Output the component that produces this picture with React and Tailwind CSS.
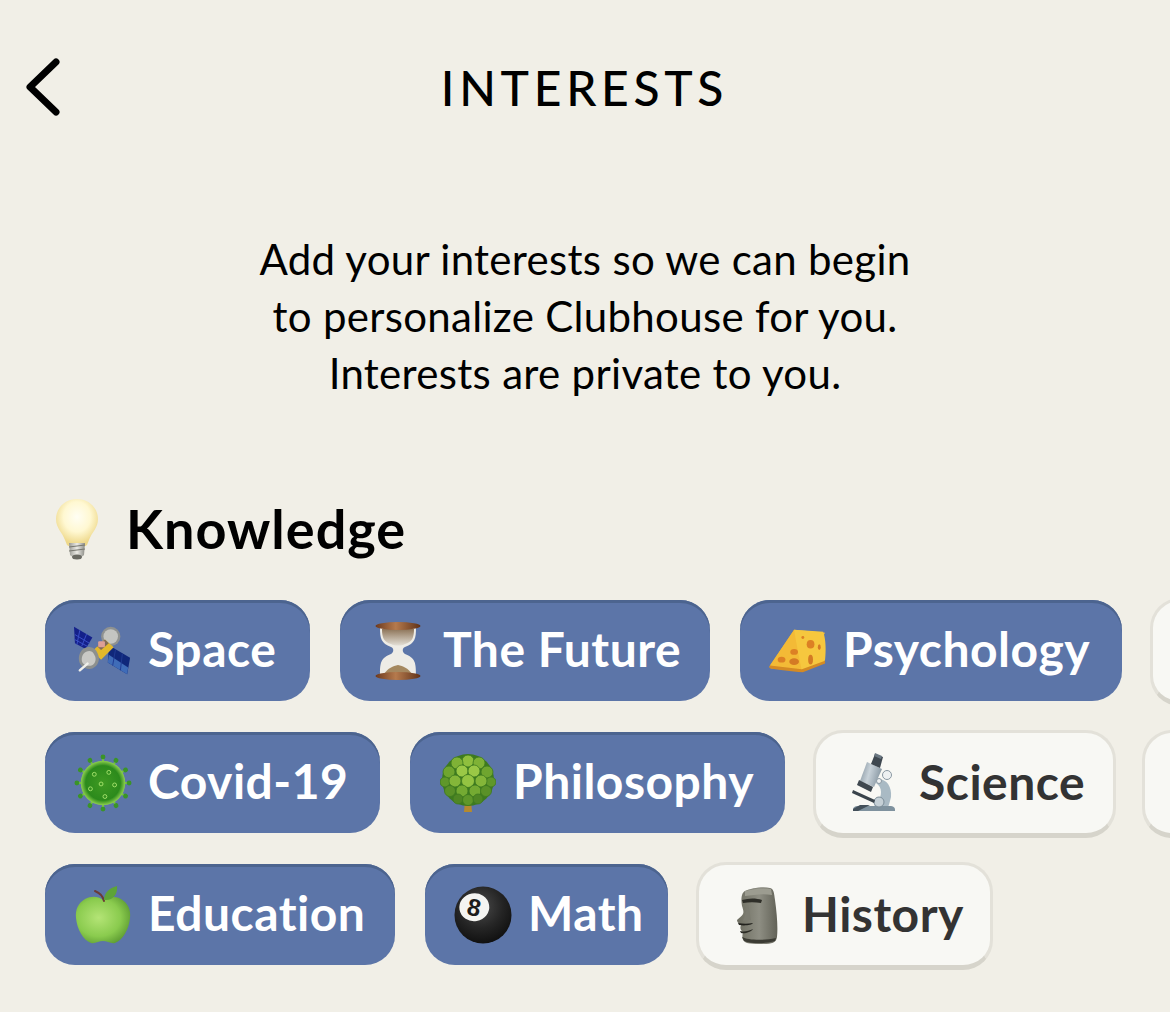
import React from "react";

const Bulb = () => (
  <svg viewBox="0 0 46 62" className="w-[46px] h-[62px]">
    <defs>
      <radialGradient id="bulbGlass" cx="50%" cy="38%" r="58%">
        <stop offset="0%" stopColor="#fffef4" />
        <stop offset="55%" stopColor="#fff8d2" />
        <stop offset="100%" stopColor="#eed88a" />
      </radialGradient>
      <linearGradient id="bulbBase" x1="0" x2="1" y1="0" y2="0">
        <stop offset="0%" stopColor="#9b9b95" />
        <stop offset="50%" stopColor="#ecebe6" />
        <stop offset="100%" stopColor="#8b8b85" />
      </linearGradient>
    </defs>
    <path d="M23 1C11 1 2 10 2 21c0 9 6 13 9 21l2 5c1 1 2 1 3 1h14c1 0 2 0 3-1l2-5c3-8 9-12 9-21C44 10 35 1 23 1z" fill="url(#bulbGlass)" />
    <path d="M15 45h16l-1 12c-2 3-12 3-14 0z" fill="url(#bulbBase)" />
    <path d="M15 49l16-2M15 53l16-2" stroke="#77776f" strokeWidth="1" />
    <ellipse cx="23" cy="59" rx="5" ry="2.500" fill="#6a6a63" />
  </svg>
);

const Satellite = () => (
  <svg viewBox="0 0 60 60" className="w-[60px] h-[60px]">
    <path d="M0 5l19 11-7 12-11-6z" fill="#14208a" />
    <path d="M6 8.500l-3 15M13 12.500l-5 12.500M1 13l15 9M0.500 18l13 7" stroke="#3a50c8" strokeWidth="1" fill="none" />
    <path d="M36 24l22 13-3 17-20-12z" fill="#10277a" />
    <path d="M36 34l20 13-1 7-20-12z" fill="#3f6cb8" />
    <path d="M43 28l-3 17M50 33l-2 17" stroke="#1f3a92" strokeWidth="1" />
    <circle cx="38" cy="15" r="10" fill="#8f9291" />
    <circle cx="38" cy="15" r="7.500" fill="#c4c5c1" />
    <path d="M19 30l13-12 9 8-13 13z" fill="#e3b92c" />
    <path d="M24 25l8-7 4 4-8 7z" fill="#7f6a58" />
    <rect x="25" y="20" width="7" height="6" rx="1" fill="#dd9f96" />
    <path d="M17 26c-7-1-12 5-12 12 0 8 8 12 14 10 6-2 8-9 6-14-1-4-4-8-8-8z" fill="#8d908e" />
    <path d="M16 30c-5 0-8 4-8 9s6 7 10 6c4-1 5-6 4-9-1-3-3-6-6-6z" fill="#c9c9c5" />
    <path d="M14 43l-8 7" stroke="#f0f0eb" strokeWidth="2.500" strokeLinecap="round" />
  </svg>
);

const Hourglass = () => (
  <svg viewBox="0 0 46 60" className="w-[46px] h-[60px]">
    <defs>
      <linearGradient id="hourWood" x1="0" x2="1" y1="0" y2="0">
        <stop offset="0%" stopColor="#6d3a1e" />
        <stop offset="45%" stopColor="#b57a4d" />
        <stop offset="100%" stopColor="#5f3118" />
      </linearGradient>
      <linearGradient id="hourSand" x1="0" x2="0" y1="0" y2="1">
        <stop offset="0%" stopColor="#8d7458" />
        <stop offset="100%" stopColor="#e3dfd6" />
      </linearGradient>
    </defs>
    <path d="M5 6h36c0 12-1 16-11 20-3 1-3 5 0 7 10 4 11 8 11 21H5c0-13 1-17 11-21 3-2 3-6 0-7C6 22 5 18 5 6z" fill="#eeece6" />
    <path d="M7 8h32c0 9-2 13-9 15-3 2-11 2-14 0-7-2-9-6-9-15z" fill="url(#hourSand)" />
    <path d="M9 53c4-6 9-8 14-9 5 1 10 3 14 9z" fill="#a5885f" />
    <ellipse cx="23" cy="5" rx="22.500" ry="4" fill="url(#hourWood)" />
    <ellipse cx="23" cy="55" rx="22.500" ry="4" fill="url(#hourWood)" />
  </svg>
);

const Cheese = () => (
  <svg viewBox="0 0 60 48" className="w-[60px] h-[48px]">
    <path d="M26 2L1 39c-1 2 0 3 2 3l31 3z" fill="#f0b02c" />
    <path d="M26 2l32 3-24 40-33-6z" fill="#f3ba36" />
    <path d="M26 2l30 2c3 8 3 20 2 29-1 3-2 3-4 4l-20 8C31 30 28 15 26 2z" fill="#f6c73e" />
    <path d="M1 39l33 4 24-9v3l-23 9c-12-1-26-3-33-4-2 0-2-2-1-3z" fill="#d48a24" />
    <ellipse cx="26" cy="25" rx="4" ry="3" fill="#dc8024" />
    <ellipse cx="13" cy="33" rx="4" ry="3" fill="#dc8024" />
    <ellipse cx="26" cy="35" rx="5" ry="3.500" fill="#d47a24" />
    <ellipse cx="43" cy="17" rx="4" ry="4.500" fill="#dc8024" />
    <ellipse cx="52" cy="20" rx="1.500" ry="3" fill="#d47a24" />
    <ellipse cx="43" cy="33" rx="2.500" ry="5" fill="#d47a24" />
    <circle cx="35" cy="10" r="1.500" fill="#dc8024" />
  </svg>
);

const spikes = [0, 30, 60, 90, 120, 150, 180, 210, 240, 270, 300, 330];

const Virus = () => (
  <svg viewBox="0 0 60 60" className="w-[60px] h-[60px]">
    <defs>
      <radialGradient id="virusBody" cx="50%" cy="50%" r="50%">
        <stop offset="0%" stopColor="#3f9a22" />
        <stop offset="78%" stopColor="#2c8a1c" />
        <stop offset="100%" stopColor="#8ed04f" />
      </radialGradient>
    </defs>
    {spikes.map((a) => (
      <g key={a} transform={`rotate(${a} 30 30)`}>
        <line x1="30" y1="8" x2="30" y2="3" stroke="#74c044" strokeWidth="2" />
        <circle cx="30" cy="3" r="2.500" fill="#3a9428" />
      </g>
    ))}
    <circle cx="30" cy="30" r="23" fill="url(#virusBody)" />
    <circle cx="21" cy="21" r="2" fill="none" stroke="#a3e06a" strokeWidth="1" />
    <circle cx="36" cy="19" r="2" fill="none" stroke="#a3e06a" strokeWidth="1" />
    <circle cx="28" cy="31" r="2" fill="none" stroke="#a3e06a" strokeWidth="1" />
    <circle cx="42" cy="32" r="2" fill="none" stroke="#a3e06a" strokeWidth="1" />
    <circle cx="17" cy="36" r="2" fill="none" stroke="#a3e06a" strokeWidth="1" />
    <circle cx="32" cy="44" r="2" fill="none" stroke="#a3e06a" strokeWidth="1" />
  </svg>
);

const clumps = [
  [28, 8, 6, "#8fbf3e"], [17, 10, 6, "#7fb236"], [39, 10, 6, "#7fb236"], [9, 19, 6, "#6fa52f"],
  [47, 19, 6, "#6fa52f"], [22, 18, 6, "#9ac846"], [34, 18, 6, "#9ac846"], [5, 29, 5, "#5f972a"],
  [51, 29, 5, "#5f972a"], [15, 28, 6, "#84b639"], [28, 28, 6.500, "#94c442"], [41, 28, 6, "#84b639"],
  [10, 38, 5.500, "#5a9128"], [22, 38, 6, "#74aa32"], [35, 38, 6, "#74aa32"], [46, 38, 5.500, "#5a9128"],
  [18, 46, 5, "#4f8624"], [28, 47, 5.500, "#5f972a"], [38, 46, 5, "#4f8624"],
];

const Tree = () => (
  <svg viewBox="0 0 56 60" className="w-[56px] h-[60px]">
    <path d="M25 48h6l1 11h-8z" fill="#b58a2e" />
    <circle cx="28" cy="27" r="26" fill="#3d7a1f" />
    {clumps.map(([x, y, r, c], i) => (
      <circle key={i} cx={x} cy={y} r={r} fill={c} stroke="#3d7a1f" strokeWidth="0.800" />
    ))}
  </svg>
);

const Microscope = () => (
  <svg viewBox="0 0 46 60" className="w-[46px] h-[60px]">
    <defs>
      <linearGradient id="scopeMetal" x1="0" x2="1" y1="0" y2="0.300">
        <stop offset="0%" stopColor="#7f8e99" />
        <stop offset="50%" stopColor="#c8d2d9" />
        <stop offset="100%" stopColor="#8b9aa5" />
      </linearGradient>
    </defs>
    <path d="M27 26c9 0 14 8 13 18-1 4-2 8-3 10H22c4-4 8-8 8-15 0-4-2-7-5-9z" fill="#a9bac4" />
    <path d="M2 57c0-3 2-4 5-4h32c3 0 5 1 5 4v1H2z" fill="#7f929e" />
    <path d="M2 56l7-4h10l-12 6H2z" fill="#43505a" />
    <circle cx="28" cy="49" r="5" fill="#c5d0d6" stroke="#7c8d98" strokeWidth="1" />
    <path d="M2 37l22 10-1 3L1 40z" fill="#39434b" />
    <path d="M16 9l15 7-8 18-14-6z" fill="url(#scopeMetal)" />
    <path d="M8 27l14 7-2 5-14-7z" fill="#3f4850" />
    <path d="M24 1l8 3-3 11-9-4z" fill="#3f4850" />
    <path d="M24 0l7 3-1 3-7-3z" fill="#6a7781" />
    <circle cx="36" cy="22" r="4.500" fill="#eef1f2" stroke="#8a98a2" strokeWidth="1" />
    <circle cx="28" cy="28" r="2.500" fill="#eef1f2" stroke="#8a98a2" strokeWidth="1" />
  </svg>
);

const Apple = () => (
  <svg viewBox="0 0 56 60" className="w-[56px] h-[60px]">
    <defs>
      <radialGradient id="appleSkin" cx="42%" cy="45%" r="62%">
        <stop offset="0%" stopColor="#b4e476" />
        <stop offset="65%" stopColor="#8acb4e" />
        <stop offset="100%" stopColor="#5f9e33" />
      </radialGradient>
    </defs>
    <path d="M28 15c-5-4-12-4-18-1C3 18 0 25 1 33c1 11 7 22 15 25 4 1 8-2 12-2s8 3 12 2c8-3 14-14 15-25 1-8-2-15-9-19-6-3-13-3-18 1z" fill="url(#appleSkin)" />
    <path d="M29 16c-1-5-4-8-9-10" stroke="#6b3b36" strokeWidth="2" fill="none" strokeLinecap="round" />
    <path d="M29 15c0-7 5-12 13-14 1 8-4 15-13 14z" fill="#5da437" />
  </svg>
);

const EightBall = () => (
  <svg viewBox="0 0 60 60" className="w-[58px] h-[58px]">
    <defs>
      <radialGradient id="ballSkin" cx="45%" cy="35%" r="70%">
        <stop offset="0%" stopColor="#4a4a4a" />
        <stop offset="55%" stopColor="#252525" />
        <stop offset="100%" stopColor="#0d0d0d" />
      </radialGradient>
    </defs>
    <circle cx="30" cy="30" r="29.500" fill="url(#ballSkin)" />
    <ellipse cx="21" cy="22" rx="15.500" ry="14.500" fill="#f4f4f1" transform="rotate(-10 21 22)" />
    <text x="21" y="31" textAnchor="middle" fontSize="25" fontWeight="700" fill="#1c1c1c" fontFamily="Liberation Sans, sans-serif" transform="rotate(12 21 22)">8</text>
  </svg>
);

const Moai = () => (
  <svg viewBox="0 0 42 60" className="w-[42px] h-[60px]">
    <defs>
      <linearGradient id="moaiStone" x1="0" x2="1" y1="0" y2="0">
        <stop offset="0%" stopColor="#6d6d60" />
        <stop offset="55%" stopColor="#8e8e83" />
        <stop offset="100%" stopColor="#626257" />
      </linearGradient>
    </defs>
    <path d="M9 6c6-3 18-5 25-3 4 1 4 5 5 12 2 14 3 28 2 37-1 6-5 7-14 7-7 0-15 0-18-2-3-2-3-6-2-10-3-2-3-5-2-7-3-2-4-3-4-5 2-2 5-4 6-6 1-2 0-5-1-8-1-6-1-13 3-15z" fill="url(#moaiStone)" />
    <path d="M9 6c8-2 18-3 26-2l1 6c-10-2-18 0-27 1z" fill="#9c9c90" />
    <path d="M6 15c7-2 14-2 20 0l-1 3c-6-1-12-1-18 0z" fill="#2e2e28" />
    <path d="M12 20c2 5 2 11 3 15l-8 1c2-5 3-10 5-16z" fill="#7c7c71" />
    <path d="M2 38c5 1 10 1 15 0-1 2-8 3-14 2z" fill="#22221d" />
    <path d="M4 46c4 1 9 0 13-2-2 3-8 5-12 4z" fill="#2b2b25" />
    <path d="M6 52c6 3 20 4 34 1l-1 3c-10 3-24 3-31 0z" fill="#3b3b33" />
  </svg>
);

const rows = [
  [
    { label: "Space", icon: Satellite, width: "w-[265px]" },
    { label: "The Future", icon: Hourglass, width: "w-[370px]" },
    { label: "Psychology", icon: Cheese, width: "w-[382px]" },
    { icon: null, width: "w-[240px]", light: true },
  ],
  [
    { label: "Covid-19", icon: Virus, width: "w-[335px]" },
    { label: "Philosophy", icon: Tree, width: "w-[375px]" },
    { label: "Science", icon: Microscope, width: "w-[303px]", light: true },
    { icon: null, width: "w-[240px]", light: true },
  ],
  [
    { label: "Education", icon: Apple, width: "w-[350px]" },
    { label: "Math", icon: EightBall, width: "w-[243px]" },
    { label: "History", icon: Moai, width: "w-[297px]", light: true },
  ],
];

const Chip = ({ label, icon: Icon, width, light }) => (
  <div
    className={`${width} shrink-0 flex items-center pl-[29px] rounded-[30px] text-[48px] tracking-[0.500px] font-bold leading-none ${
      light
        ? "h-[108px] -mx-[2px] mt-[3px] border-[3px] border-b-[5px] border-[#e3e1d9] border-b-[#d6d4cb] bg-[#f8f8f4] text-[#333333]"
        : "h-[101px] bg-[#5c75a8] text-white shadow-[inset_0_3px_0_#4c648f]"
    }`}
  >
    {Icon && (
      <span className="w-[58px] mr-[16px] shrink-0 flex items-center justify-center">
        <Icon />
      </span>
    )}
    {label && <span className="whitespace-nowrap -mt-[3px]">{label}</span>}
  </div>
);

export default function App() {
  return (
    <div className="w-[1170px] h-[1012px] overflow-hidden bg-[#f1efe7] text-black font-['Lato','Noto_Sans',sans-serif]">
      <header className="h-[176px] pt-[57px] pl-[24px] grid grid-cols-[1fr_auto_1fr] items-start">
        <svg viewBox="0 0 40 60" className="w-[40px] h-[60px]" fill="none" stroke="#000" strokeWidth="7" strokeLinecap="round" strokeLinejoin="round">
          <path d="M32 5L6 30l26 25" />
        </svg>
        <h1 className="mt-[5px] -ml-[25px] text-[48px] leading-[52px] font-medium tracking-[4.700px]">INTERESTS</h1>
        <div />
      </header>

      <p className="mt-[55px] text-center text-[42px] leading-[57px] font-normal tracking-[0.300px]">
        Add your interests so we can begin
        <br />
        to personalize Clubhouse for you.
        <br />
        Interests are private to you.
      </p>

      <section className="mt-[96px] pl-[45px]">
        <div className="h-[62px] flex items-center">
          <span className="ml-[9px] w-[46px] mr-[26px] flex"><Bulb /></span>
          <h2 className="text-[54px] tracking-[1px] font-bold leading-none">Knowledge</h2>
        </div>
        <div className="mt-[40px] flex flex-col gap-[31px]">
          {rows.map((row, i) => (
            <div key={i} className="h-[101px] flex items-center gap-[30px]">
              {row.map((chip, j) => (
                <Chip key={j} {...chip} />
              ))}
            </div>
          ))}
        </div>
      </section>
    </div>
  );
}
